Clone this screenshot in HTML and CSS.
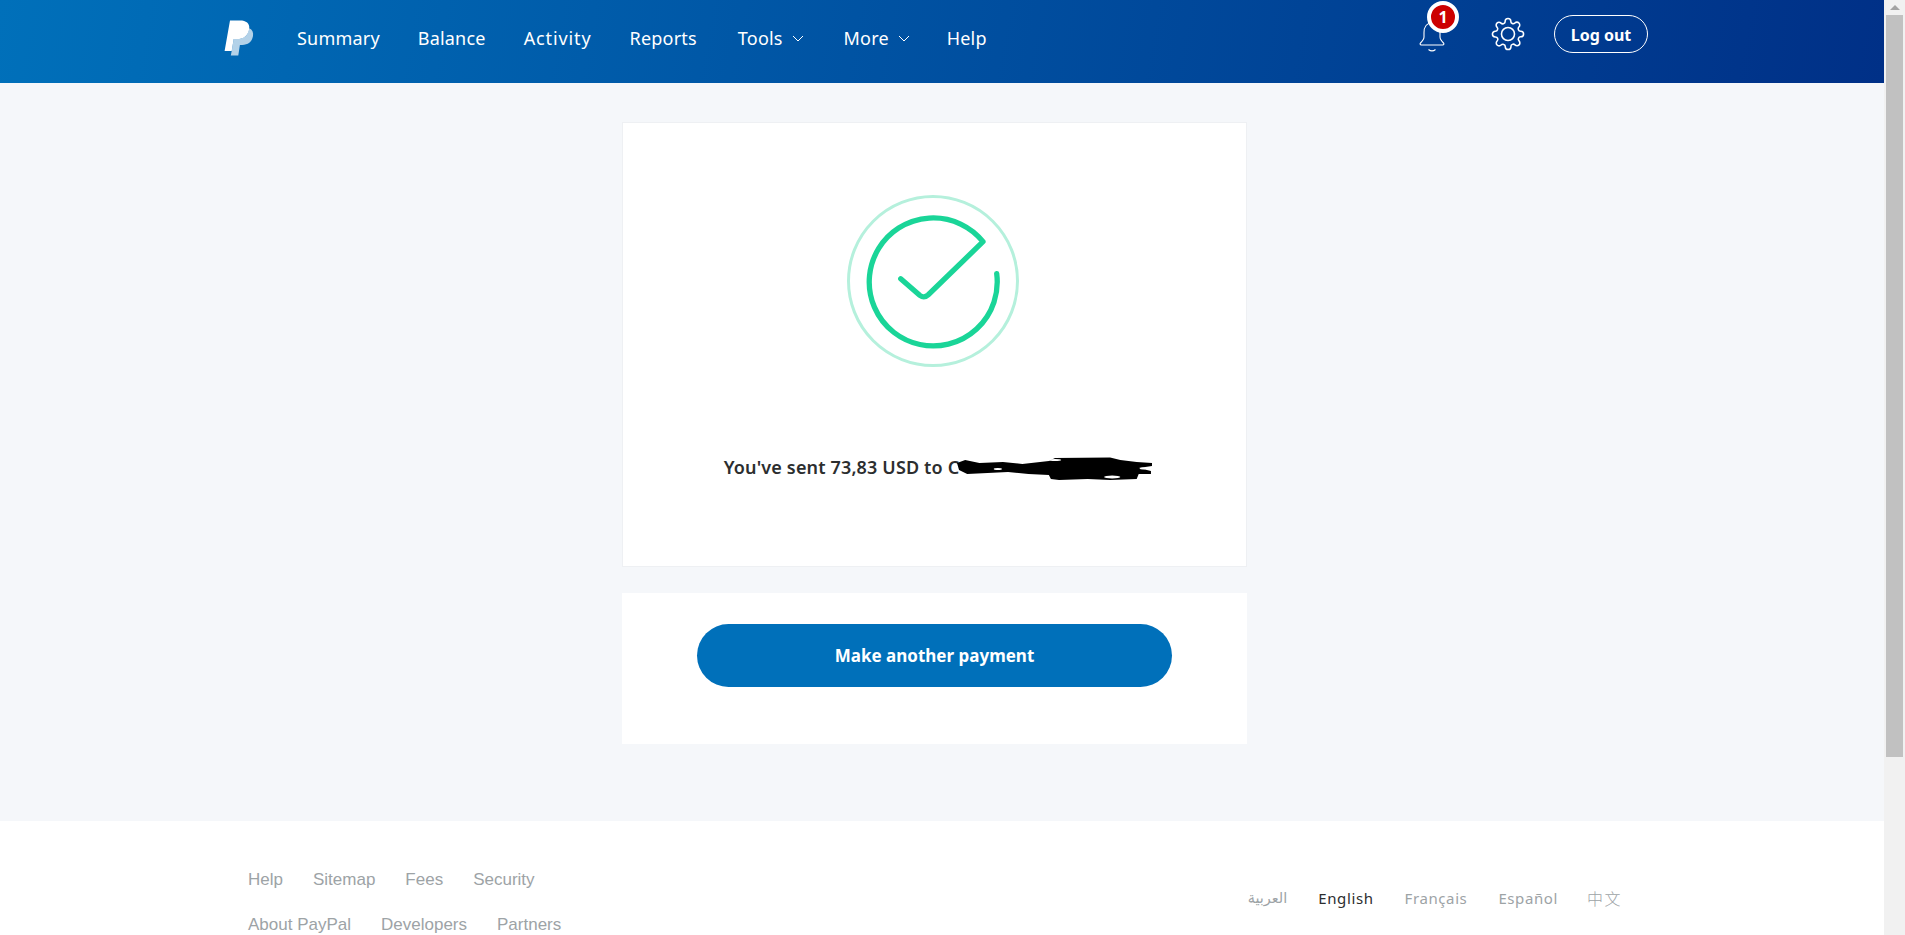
FILE: index.html
```html
<!DOCTYPE html>
<html lang="en">
<head>
  <meta charset="UTF-8">
  <title>PayPal: Payment sent</title>
  <link rel="stylesheet" href="styles.css">
</head>
<body>
  <div class="page">
    <header class="topbar">
      <svg class="logo" viewBox="0 0 30 36" aria-label="PayPal">
        <path class="logo-front" d="M6 0.5h10c6 0 10 2.600 9.200 8.400C24.300 15.500 19.500 19 13 19H9.700L7.700 31H0.600z"/>
        <path class="logo-back" d="M25.300 8.200c3 1.400 4.300 4.200 3.700 7.800-1 6-5.200 8.900-10.800 8.900h-2.300L14.300 35.500H6.800L7.700 31 9.700 19H13c6.500 0 11.300-3.500 12.300-10.800z"/>
      </svg>
      <nav class="mainnav">
        <a>Summary</a>
        <a>Balance</a>
        <a class="nav-wide">Activity</a>
        <a>Reports</a>
        <a class="nav-menu">Tools <svg class="caret" viewBox="0 0 12 7"><path d="M1 1l5 5 5-5"/></svg></a>
        <a class="nav-menu">More <svg class="caret" viewBox="0 0 12 7"><path d="M1 1l5 5 5-5"/></svg></a>
        <a>Help</a>
      </nav>
      <div class="tools">
        <div class="bell">
          <svg viewBox="0 0 26 32">
            <path d="M13 3C7.500 3 5 7.500 5 12.500v4.500c0 2.500-1.500 4-3.500 6-.8.800-.4 2 .8 2h21.400c1.200 0 1.600-1.200.8-2-2-2-3.500-3.500-3.500-6v-4.500C21 7.500 18.500 3 13 3z"/>
            <path d="M9.500 29.500c2 1.600 5 1.600 7 0"/>
          </svg>
          <span class="badge">1</span>
        </div>
        <svg class="gear" viewBox="0 0 24 24">
          <circle cx="12" cy="12" r="4.600"/>
          <path d="M19.400 15a1.650 1.650 0 0 0 .33 1.820l.06.06a2 2 0 0 1 0 2.830 2 2 0 0 1-2.830 0l-.06-.06a1.650 1.650 0 0 0-1.820-.33 1.650 1.650 0 0 0-1 1.510V21a2 2 0 0 1-2 2 2 2 0 0 1-2-2v-.09A1.650 1.650 0 0 0 9 19.400a1.650 1.650 0 0 0-1.820.33l-.06.06a2 2 0 0 1-2.830 0 2 2 0 0 1 0-2.830l.06-.06a1.650 1.650 0 0 0 .33-1.820 1.650 1.650 0 0 0-1.510-1H3a2 2 0 0 1-2-2 2 2 0 0 1 2-2h.09A1.650 1.650 0 0 0 4.600 9a1.650 1.650 0 0 0-.33-1.820l-.06-.06a2 2 0 0 1 0-2.830 2 2 0 0 1 2.830 0l.06.06a1.650 1.650 0 0 0 1.820.33H9a1.650 1.650 0 0 0 1-1.510V3a2 2 0 0 1 2-2 2 2 0 0 1 2 2v.09a1.650 1.650 0 0 0 1 1.510 1.650 1.650 0 0 0 1.820-.33l.06-.06a2 2 0 0 1 2.830 0 2 2 0 0 1 0 2.830l-.06.06a1.650 1.650 0 0 0-.33 1.820V9a1.650 1.650 0 0 0 1.510 1H21a2 2 0 0 1 2 2 2 2 0 0 1-2 2h-.09a1.650 1.650 0 0 0-1.510 1z"/>
        </svg>
        <a class="logout">Log out</a>
      </div>
    </header>

    <main class="content">
      <section class="card card-result">
        <svg class="tick" viewBox="0 0 176 176">
          <circle class="tick-ring" cx="88" cy="88" r="84.500"/>
          <path class="tick-mark" d="M151.700 80.700A64 64 0 1 1 138 48.700L83 102Q79 105.500 75 102.500L55.700 85.700"/>
        </svg>
        <p class="sent">You've sent 73,83 USD to C<svg class="scribble" viewBox="0 0 192 26" preserveAspectRatio="none">
          <path d="M0 9L8 6 22 9 45 8 64 10 90 7 96 4 150 3.500 160 6 176 8 191 9V12L178 14 190 17V20L178 20 176 25 150 26 128 25 100 26 92 25 90 21 70 20 50 18 30 19 10 20 2 16z"/>
          <ellipse class="speck" cx="96" cy="6" rx="6" ry="1"/>
          <ellipse class="speck" cx="152" cy="23" rx="8" ry="1.500"/>
          <ellipse class="speck" cx="182" cy="14.500" rx="3" ry="1"/>
          <ellipse class="speck" cx="40" cy="15" rx="4" ry="1"/>
        </svg></p>
      </section>
      <section class="card card-action">
        <a class="primary-btn">Make another payment</a>
      </section>
    </main>

    <footer class="footer">
      <div class="footer-links">
        <div class="footer-row"><a>Help</a><a>Sitemap</a><a>Fees</a><a>Security</a></div>
        <div class="footer-row"><a>About PayPal</a><a>Developers</a><a>Partners</a></div>
      </div>
      <div class="langs">
        <a class="lang-ar">العربية</a>
        <a class="active">English</a>
        <a>Français</a>
        <a>Español</a>
        <a class="lang-zh">中文</a>
      </div>
    </footer>
  </div>

  <div class="scrollbar">
    <span class="scroll-up"></span>
    <span class="scroll-thumb"></span>
  </div>
</body>
</html>
```

FILE: styles.css
```css
html, body {
  height: 100%;
}

body {
  margin: 0;
  display: flex;
  overflow: hidden;
  background: #f5f7fa;
  font-family: "Noto Sans", "Open Sans", sans-serif;
}

.page {
  flex: 1;
  min-width: 0;
}

/* header */
.topbar {
  height: 83px;
  box-sizing: border-box;
  display: flex;
  align-items: center;
  padding: 0 0 8px 224px;
  background: linear-gradient(100deg, #0070ba, #003087);
  color: #fff;
}

.logo {
  width: 30px;
  height: 36px;
}

.logo-front {
  fill: #fff;
}

.logo-back {
  fill: #fff;
  opacity: 0.7;
}

.mainnav {
  display: flex;
  gap: 38px;
  margin-left: 43px;
  font-size: 18px;
  letter-spacing: 0.2px;
}

.nav-wide {
  letter-spacing: 0.9px;
}

.nav-menu {
  margin: 0 -1px 0 3px;
}

.caret {
  width: 12px;
  height: 7px;
  margin-left: 4px;
  vertical-align: 3px;
  fill: none;
  stroke: #fff;
  stroke-width: 1;
}

.tools {
  display: flex;
  align-items: center;
  margin: 0 236px 7px auto;
}

.bell {
  position: relative;
  width: 26px;
  height: 32px;
  margin-top: 4px;
}

.bell svg {
  width: 26px;
  height: 32px;
  fill: none;
  stroke: #fff;
  stroke-width: 1.100;
}

.badge {
  position: absolute;
  left: 8px;
  top: -19px;
  width: 24px;
  height: 24px;
  border: 4px solid #fff;
  border-radius: 50%;
  background: #cc0000;
  font-size: 16px;
  font-weight: 700;
  line-height: 24px;
  text-align: center;
}

.gear {
  width: 34px;
  height: 34px;
  margin-left: 46px;
  fill: none;
  stroke: #fff;
  stroke-width: 1.100;
}

.logout {
  width: 92px;
  height: 36px;
  margin-left: 29px;
  border: 1px solid #fff;
  border-radius: 19px;
  font-size: 16px;
  font-weight: 700;
  line-height: 38px;
  text-align: center;
}

/* cards */
.content {
  display: flex;
  flex-direction: column;
  align-items: center;
  gap: 26px;
  padding: 39px 15px 77px 0;
}

.card {
  width: 625px;
  box-sizing: border-box;
  background: #fff;
}

.card-result {
  height: 445px;
  display: flex;
  flex-direction: column;
  align-items: center;
  padding-top: 70px;
  border: 1px solid #eef0f3;
}

.tick {
  width: 176px;
  height: 176px;
  margin-right: 4px;
  fill: none;
}

.tick-ring {
  stroke: #b5f0dc;
  stroke-width: 3;
}

.tick-mark {
  stroke: #1ad598;
  stroke-width: 5.300;
  stroke-linecap: round;
  stroke-linejoin: round;
}

.sent {
  display: flex;
  align-items: center;
  height: 26px;
  margin: 85px 0 0;
  padding-left: 8px;
  color: #2c2e2f;
  font-size: 18px;
  font-weight: 600;
  letter-spacing: 0.15px;
  white-space: nowrap;
}

.scribble {
  width: 196px;
  height: 26px;
  margin-left: -2px;
}

.scribble path {
  fill: #000;
}

.scribble .speck {
  fill: #fff;
}

.card-action {
  height: 151px;
  display: flex;
  justify-content: center;
  padding-top: 31px;
}

.primary-btn {
  width: 475px;
  height: 63px;
  border-radius: 32px;
  background: #0070ba;
  color: #fff;
  font-size: 17px;
  font-weight: 700;
  line-height: 63px;
  text-align: center;
}

/* footer */
.footer {
  display: flex;
  justify-content: space-between;
  height: 300px;
  padding: 47px 262px 0 248px;
  background: #fff;
}

.footer-row {
  display: flex;
  gap: 30px;
  height: 45px;
  color: #9da3a6;
  font-family: "Liberation Sans", Arial, sans-serif;
  font-size: 17px;
  line-height: 24px;
}

.langs {
  display: flex;
  align-items: flex-start;
  gap: 31px;
  padding-top: 18px;
  color: #9da3a6;
  font-size: 15px;
  letter-spacing: 0.6px;
  line-height: 24px;
}

.langs .active {
  color: #2c2e2f;
}

.lang-ar {
  font-family: "DejaVu Sans", sans-serif;
  font-size: 14.500px;
  letter-spacing: 0;
}

.lang-zh {
  margin-left: -2px;
  font-family: "Noto Sans CJK SC", sans-serif;
  font-size: 16px;
  font-weight: 300;
  letter-spacing: 1.500px;
}

/* scrollbar */
.scrollbar {
  flex: 0 0 21px;
  display: flex;
  flex-direction: column;
  align-items: center;
  box-sizing: border-box;
  padding: 0 1px;
  background: #f1f1f1;
}

.scroll-up {
  width: 0;
  height: 0;
  margin: 5px 0 4px;
  border: 5px solid transparent;
  border-top: 0;
  border-bottom-color: #a3a3a3;
}

.scroll-thumb {
  width: 17px;
  height: 742px;
  margin-top: 1px;
  background: #c1c1c1;
}
```
